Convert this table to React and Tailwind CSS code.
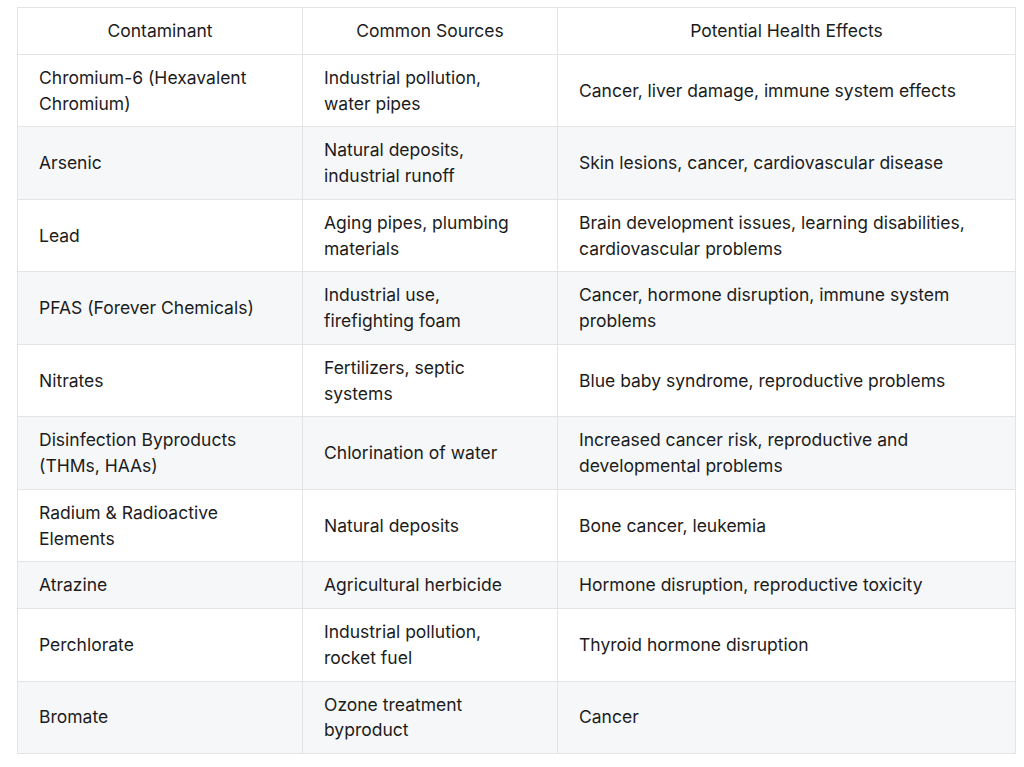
import React from "react";

const rows = [
  ["Chromium-6 (Hexavalent Chromium)", "Industrial pollution, water pipes", "Cancer, liver damage, immune system effects"],
  ["Arsenic", "Natural deposits, industrial runoff", "Skin lesions, cancer, cardiovascular disease"],
  ["Lead", "Aging pipes, plumbing materials", "Brain development issues, learning disabilities, cardiovascular problems"],
  ["PFAS (Forever Chemicals)", "Industrial use, firefighting foam", "Cancer, hormone disruption, immune system problems"],
  ["Nitrates", "Fertilizers, septic systems", "Blue baby syndrome, reproductive problems"],
  ["Disinfection Byproducts (THMs, HAAs)", "Chlorination of water", "Increased cancer risk, reproductive and developmental problems"],
  ["Radium & Radioactive Elements", "Natural deposits", "Bone cancer, leukemia"],
  ["Atrazine", "Agricultural herbicide", "Hormone disruption, reproductive toxicity"],
  ["Perchlorate", "Industrial pollution, rocket fuel", "Thyroid hormone disruption"],
  ["Bromate", "Ozone treatment byproduct", "Cancer"],
];

export default function App() {
  return (
    <div className="bg-white min-h-screen pl-[17px] pt-[7px] font-['Inter',sans-serif] text-[17.5px] leading-[25.75px] text-[#1c1c1c]">
      <table className="w-[999px] table-fixed border-collapse border border-[#e3e4e6]">
        <colgroup>
          <col className="w-[285px]" />
          <col className="w-[255px]" />
          <col />
        </colgroup>
        <thead>
          <tr>
            <th className="border border-[#e3e4e6] px-5 py-[10px] font-normal text-center">Contaminant</th>
            <th className="border border-[#e3e4e6] px-5 py-[10px] font-normal text-center">Common Sources</th>
            <th className="border border-[#e3e4e6] px-5 py-[10px] font-normal text-center">Potential Health Effects</th>
          </tr>
        </thead>
        <tbody>
          {rows.map((r, i) => (
            <tr key={i} className={i % 2 === 1 ? "bg-[#f6f7f9]" : "bg-white"}>
              {r.map((c, j) => (
                <td key={j} className="border border-[#e3e4e6] pl-[21px] pr-[28px] py-[10px] align-middle">
                  {c}
                </td>
              ))}
            </tr>
          ))}
        </tbody>
      </table>
    </div>
  );
}
